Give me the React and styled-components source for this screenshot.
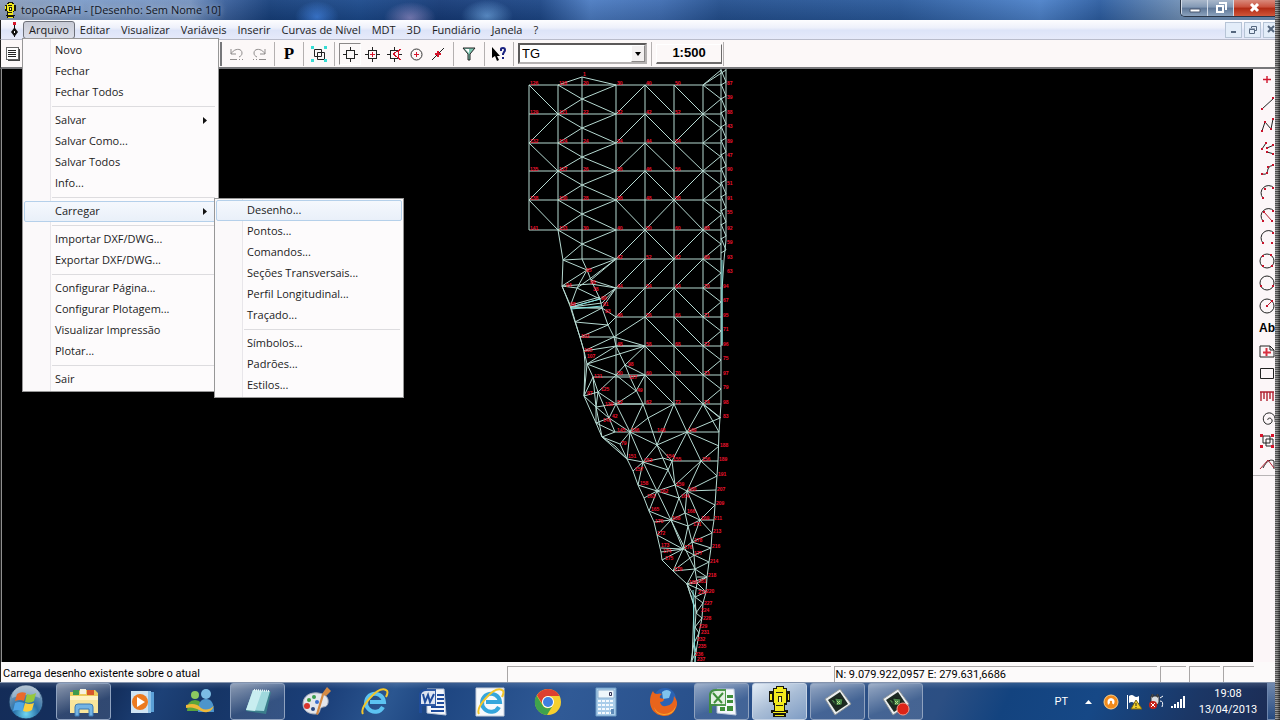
import React from 'react';
import styled, { createGlobalStyle, css } from 'styled-components';

const UI = '"Open Sans", "Noto Sans", sans-serif';

const GlobalStyle = createGlobalStyle`
  * { box-sizing: border-box; }
  html, body { margin: 0; padding: 0; background: #000; }
  button, select { font: inherit; color: inherit; }
  svg { display: block; }
`;

/* ---------- shell ---------- */

const Desktop = styled.div`
  display: grid;
  grid-template-columns: minmax(0, 1fr) 5px;
  min-height: 100vh;
  overflow: hidden;
  font: 11px/16px ${UI};
  color: #1c1c1c;
`;

const Screen = styled.div`
  display: flex;
  flex-direction: column;
  min-width: 0;
  overflow: hidden;
`;

const EdgeStrip = styled.div`
  background: linear-gradient(90deg, rgba(0, 0, 0, 0) 40%, rgba(0, 0, 0, 0.5)),
    repeating-linear-gradient(180deg, #8e8e8e 0 1px, #5a5a5a 1px 2px, #a2a2a2 2px 3px, #4a4a4a 3px 4px);
`;

/* ---------- title bar ---------- */

const TitleBar = styled.header`
  display: flex;
  align-items: center;
  height: 20px;
  padding-left: 2px;
  color: #10151f;
  background:
    linear-gradient(180deg, rgba(255, 255, 255, 0.05), rgba(0, 0, 0, 0.12)),
    radial-gradient(ellipse 22px 16px at 317px 17px, #3b7bd8, transparent),
    radial-gradient(ellipse 26px 16px at 410px 18px, #7b80bd, transparent),
    radial-gradient(ellipse 26px 16px at 487px 16px, #5d93d2, transparent),
    linear-gradient(90deg, #8c9db8 0, #7c9cc9 80px, #7593c0 190px, #3a609c 225px, #17407c 270px,
      #1c4a8c 360px, #163b78 440px, #1d4787 540px, #4c7cc2 590px, #3f6db2 660px, #24508f 720px,
      #2a5a9c 900px, #4d82ca 1040px, #2d5ea2 1100px, #6f8fb6 1180px);
`;

const Title = styled.h1`
  flex: 1;
  margin: 0 0 0 3px;
  font: 400 11px/20px ${UI};
  text-shadow: 0 0 6px rgba(255, 255, 255, 0.7);
`;

const WindowButtons = styled.div`
  display: flex;
  align-self: flex-start;
  height: 17px;
  border: 1px solid #2a3648;
  border-width: 0 0 1px 1px;
  border-radius: 0 0 0 5px;
  overflow: hidden;
`;

const WindowButton = styled.button`
  display: grid;
  place-items: center;
  width: ${(p) => (p.$close ? 42 : 26)}px;
  padding: 0;
  border: 0;
  border-left: 1px solid #d3dce8;
  background: ${(p) =>
    p.$close
      ? 'linear-gradient(180deg, #d98a7c 0, #c9503c 45%, #b02a14 50%, #d0563a 100%)'
      : 'linear-gradient(180deg, #a9b8cb 0, #8298b4 45%, #5d7696 50%, #8ba2bd 100%)'};
`;

/* ---------- menu bar ---------- */

const MenuBar = styled.nav`
  position: relative;
  z-index: 5;
  display: flex;
  align-items: center;
  height: 20px;
  padding-left: 7px;
  border-left: 1px solid #222;
  border-bottom: 1px solid #b9bccb;
  background: linear-gradient(180deg, #fdfdff 0, #eef1fb 40%, #dde4f8 55%, #e6eafa 100%);
`;

const MenuSlot = styled.div`
  position: relative;
  margin-left: ${(p) => (p.$first ? 5 : 0)}px;
`;

const MenuButton = styled.button`
  display: block;
  height: 18px;
  padding: 0 5px 0 ${(p) => (p.$open ? 5 : 4)}px;
  border: 1px solid ${(p) => (p.$open ? '#6d7079' : 'transparent')};
  border-radius: 3px;
  background: ${(p) => (p.$open ? 'linear-gradient(180deg, #c8cbd6, #dcdfea)' : 'none')};
  line-height: 16px;
  white-space: nowrap;
`;

const MdiButtons = styled.div`
  display: flex;
  gap: 2px;
  margin: 0 -5px 0 auto;
`;

const MdiButton = styled.button`
  display: grid;
  place-items: center;
  width: 17px;
  height: 16px;
  padding: 0;
  border: 1px solid #b6c4d6;
  background: #e3edf9;
`;

const Popup = styled.ul`
  position: absolute;
  z-index: 10;
  margin: 0;
  padding: 1px;
  list-style: none;
  border: 1px solid #979797;
  background: linear-gradient(90deg, #fbf9fa 27px, #e8e6ea 27px 28px, #fdfbfc 28px);
`;

const FilePopup = styled(Popup)`
  top: 17px;
  left: -1px;
  width: 197px;
`;

const LoadPopup = styled(Popup)`
  top: -3px;
  left: 190px;
  width: 190px;
`;

const PopupRow = styled.li`
  position: relative;
`;

const PopupButton = styled.button`
  display: flex;
  align-items: center;
  justify-content: space-between;
  width: 100%;
  height: 21px;
  padding: 0 9px 0 30px;
  border: 1px solid transparent;
  border-radius: 2px;
  background: none;
  text-align: left;
  ${(p) =>
    p.$active &&
    css`
      border-color: #b5d0ea;
      background: linear-gradient(180deg, #f5f8fd, #e9f0f9);
    `}
`;

const PopupRule = styled.li`
  height: 7px;
  margin: 0 2px 0 28px;
  padding-top: 3px;
  &::before {
    content: '';
    display: block;
    border-top: 1px solid #dddcdf;
  }
`;

/* ---------- toolbar ---------- */

const Toolbar = styled.div`
  display: flex;
  align-items: center;
  height: 29px;
  border-left: 1px solid #222;
  border-bottom: 2px solid #77777a;
  background: #fcf8f8;
`;

const ToolGroup = styled.div`
  display: flex;
  align-items: center;
  height: 24px;
  padding: 0 ${(p) => p.$pad || 0}px;
  border-right: 1px solid #b4b0b0;
`;

const FileTools = styled(ToolGroup)`
  width: 221px;
  padding-left: 1px;
  border-right: 2px solid #77777a;
`;

const ToolButton = styled.button`
  display: grid;
  place-items: center;
  width: 22px;
  height: 22px;
  padding: 0;
  border: 1px solid transparent;
  background: none;
  ${(p) =>
    p.$pressed &&
    css`
      border-color: #8b8888 #fff #fff #8b8888;
    `}
`;

const BoldTool = styled(ToolButton)`
  font: 700 17px/20px "Liberation Serif", serif;
  color: #000;
`;

const SelectBox = styled.div`
  position: relative;
  margin: 0 4px;
`;

const LayerSelect = styled.select`
  appearance: none;
  display: block;
  width: 129px;
  height: 21px;
  padding: 0 18px 0 2px;
  border: 2px solid;
  border-color: #5b5959 #b5b2b2 #b5b2b2 #5b5959;
  border-radius: 0;
  background: #fff;
  font: 13px/16px "Liberation Sans", sans-serif;
  color: #000;
`;

const SelectArrow = styled.span`
  position: absolute;
  top: 2px;
  right: 2px;
  display: grid;
  place-items: center;
  width: 14px;
  height: 17px;
  border: 1px solid;
  border-color: #fff #8a8787 #8a8787 #fff;
  background: #f4f1f1;
  pointer-events: none;
`;

const ScaleButton = styled.button`
  width: 66px;
  height: 20px;
  margin: 0 1px 0 4px;
  padding: 0;
  border: 1px solid;
  border-color: #fff #6c6a6a #6c6a6a #fff;
  border-bottom-width: 2px;
  background: #fcf8f8;
  font: 700 13px/16px "Liberation Sans", sans-serif;
  color: #000;
`;

/* ---------- workspace ---------- */

const Workspace = styled.main`
  display: flex;
  flex: 1;
  min-height: 0;
  border-left: 1px solid #222;
`;

const Canvas = styled.section`
  display: flex;
  flex: 1;
  justify-content: center;
  min-width: 0;
  overflow: hidden;
  border-left: 1px solid #8f8f8f;
  background: #000;
`;

const Label = styled.text`
  font: 700 5px "Liberation Sans", sans-serif;
  fill: #f0142e;
`;

const DrawTools = styled.aside`
  width: 22px;
  background: #fcf6f8;
`;

const DrawGrid = styled.div`
  display: grid;
  grid-auto-rows: 1fr;
  height: 407px;
  border-bottom: 1px solid #b8b4b6;
`;

const DrawButton = styled.button`
  display: grid;
  place-items: center start;
  min-height: 0;
  padding: 0 0 0 6px;
  border: 0;
  background: none;
  overflow: hidden;
`;

const TextTool = styled(DrawButton)`
  font: 700 12px/16px "Liberation Sans", sans-serif;
  color: #000;
`;

/* ---------- status bar ---------- */

const StatusBar = styled.footer`
  display: grid;
  grid-template-columns: minmax(0, 502fr) minmax(0, 324fr) minmax(0, 324fr) 26px 31px 31px 18px;
  gap: 3px;
  height: 20px;
  padding: 4px 0 0 2px;
  border-left: 1px solid #222;
  background: #fcfafa;
  font-family: Roboto, ${UI};
  color: #000;
`;

const Pane = styled.div`
  padding-left: ${(p) => (p.$plain ? 0 : 1)}px;
  border: ${(p) => (p.$plain ? 0 : '1px solid #a9a6a6')};
  border-width: ${(p) => (p.$plain ? 0 : '1px 0 0 1px')};
  line-height: 15px;
  white-space: nowrap;
`;

/* ---------- taskbar ---------- */

const Taskbar = styled.div`
  display: flex;
  align-items: stretch;
  height: 38px;
  border-top: 1px solid #8493ac;
  background:
    linear-gradient(180deg, rgba(255, 255, 255, 0.12), transparent 6px),
    linear-gradient(115deg, #142c58 0, #14305f 110px, #1d4177 150px, #163566 200px, #1b3f79 300px, #2b5690 360px,
      #1d4580 400px, #305a96 520px, #284f8a 660px, #2c4f83 860px, #13437f 920px, #164886 1000px, #1b3766 1090px,
      #1c2d56 1160px, #1c3a6c 1280px);
`;

const StartButton = styled.button`
  display: grid;
  place-items: center;
  width: 46px;
  margin: 0 7px 0 3px;
  padding: 0;
  border: 0;
  background: none;
`;

const TaskList = styled.div`
  display: flex;
  flex: 1;
  gap: 3px;
  min-width: 0;
`;

const TaskButton = styled.button`
  display: grid;
  place-items: center;
  flex: 0 0 55px;
  padding: 0;
  border: 1px solid transparent;
  border-radius: 3px;
  background: none;
  ${(p) =>
    p.$running &&
    css`
      border-color: #8fa2bf;
      background: linear-gradient(160deg, rgba(255, 255, 255, 0.5), rgba(255, 255, 255, 0.12) 60%);
    `}
  ${(p) =>
    p.$active &&
    css`
      border-color: #c4d2e4;
      background: linear-gradient(150deg, #e4edf6, #a9bdd6 50%, #7e9cc4);
    `}
`;

const Tray = styled.div`
  display: flex;
  align-items: center;
  font-family: Roboto, ${UI};
  color: #fff;
`;

const Language = styled.span`
  margin-right: 9px;
`;

const TrayButton = styled.button`
  display: grid;
  place-items: center;
  width: ${(p) => p.$width || 22}px;
  height: 20px;
  padding: 0;
  border: 0;
  background: none;
`;

const Clock = styled.time`
  width: 78px;
  text-align: center;
`;

const ShowDesktop = styled.button`
  width: 8px;
  align-self: stretch;
  padding: 0;
  border: 1px solid #6d86ad;
  border-right: 0;
  background: linear-gradient(180deg, #7088ad, #274a80);
`;

/* ---------- terrain mesh ---------- */

const ROWS = [85, 114, 143, 171, 200, 230, 259, 288, 317, 346, 375, 404];
const COL = { A: 529, B: 558, C: 582, D: 616, E: 645, F: 674, G: 703, H: 721, I: 726 };
const MIDS = ROWS.map((y) => y + 14);

function gridLines() {
  const out = [];
  const seg = (a, ra, b, rb) => out.push([COL[a], ROWS[ra], COL[b], ROWS[rb]]);
  ROWS.forEach((y, r) => out.push([r < 6 ? COL.A : r === 6 ? COL.C : COL.D, y, COL.H, y]));
  seg('A', 0, 'A', 5);
  seg('B', 0, 'B', 5);
  out.push([COL.C, 77, COL.C, 259], [COL.C, 77, COL.B, 85], [COL.C, 77, COL.D, 85]);
  ['D', 'E', 'F', 'G'].forEach((c) => seg(c, 0, c, 11));
  [[0, 1], [2, 3], [4, 5]].forEach(([a, b]) => seg('A', a, 'B', b));
  [[2, 1], [4, 3]].forEach(([a, b]) => seg('A', a, 'B', b));
  for (let r = 0; r < 6; r += 1) {
    const y = MIDS[r];
    out.push([COL.B, ROWS[r], COL.C, y], [COL.D, ROWS[r], COL.C, y], [COL.C, y, COL.D, ROWS[r + 1]]);
    if (r < 5) out.push([COL.C, y, COL.B, ROWS[r + 1]]);
  }
  out.push([COL.C, MIDS[5], 563, 260]);
  const down = { DE: '00001000', EF: '11110100111', FG: '10101001111' };
  Object.entries(down).forEach(([pair, flags]) => {
    [...flags].forEach((f, r) => (f === '1' ? seg(pair[0], r, pair[1], r + 1) : seg(pair[0], r + 1, pair[1], r)));
  });
  for (let r = 0; r < 12; r += 1) {
    out.push([COL.G, ROWS[r], COL.H, MIDS[r]]);
    out.push([COL.H, MIDS[r] - 29, COL.G, ROWS[r]]);
  }
  for (let y = 70; y < 240; y += 14) {
    out.push([COL.H, y, COL.I, y + 12], [COL.I, y + 12, COL.H, y + 15]);
  }
  return out;
}

const STRIPS = [
  [703, 85, 726, 70], [721, 69, 721, 404, 719, 432, 718, 461, 716, 490, 714, 520, 712, 533, 711, 548, 709, 562, 707, 577, 706, 592, 703, 603, 702, 618, 699, 633, 696, 652, 695, 662],
  [726, 69, 726, 240, 724, 260, 722, 290, 722, 346],
  [558, 230, 563, 260, 562, 286, 570, 306, 575, 322, 580, 337, 584, 351, 587, 364, 584, 396, 596, 423, 602, 437, 627, 459, 633, 471, 638, 485, 644, 498, 649, 511, 654, 522, 657, 535, 661, 552, 662, 560, 673, 571, 687, 584, 694, 606, 692, 662],
  [562, 286, 568, 300, 571, 307, 584, 351, 585, 364, 584, 396],
  [582, 259, 587, 270, 591, 280, 600, 299, 602, 308, 608, 325, 614, 337, 616, 346, 625, 365, 630, 377, 638, 394, 643, 404, 648, 418, 657, 445, 668, 470, 675, 485, 679, 498, 685, 513, 688, 526, 692, 542, 694, 555, 695, 569, 697, 583, 695, 597, 696, 613, 695, 627, 694, 643, 691, 662],
  [563, 260, 582, 259], [563, 260, 587, 270, 616, 259, 591, 280, 616, 288, 600, 299, 571, 307, 602, 303, 616, 288, 602, 308, 571, 307],
  [562, 286, 587, 270], [562, 286, 591, 284, 616, 288], [587, 270, 577, 288, 571, 304], [577, 288, 591, 278, 616, 259], [577, 288, 600, 299], [562, 286, 577, 288],
  [571, 305, 600, 297], [571, 308, 602, 308], [575, 322, 608, 325, 616, 317], [575, 322, 602, 308, 616, 317],
  [580, 337, 614, 337, 645, 317], [580, 337, 608, 325], [584, 351, 616, 346, 645, 346], [584, 351, 614, 337, 645, 346], [587, 364, 645, 346, 625, 365, 645, 375, 630, 377, 593, 377],
  [587, 364, 616, 346], [587, 364, 616, 375, 625, 365], [587, 364, 593, 377, 598, 392, 616, 375], [584, 396, 593, 377, 596, 407], [584, 396, 598, 392, 616, 404, 636, 391, 645, 375],
  [616, 375, 636, 391], [584, 396, 596, 407, 616, 404, 643, 404], [598, 392, 596, 407, 596, 423, 609, 418, 616, 404], [598, 392, 609, 418, 615, 432, 602, 437, 620, 444, 630, 432],
  [596, 407, 609, 418, 630, 432, 616, 404], [615, 432, 719, 432], [596, 423, 615, 432], [620, 444, 627, 459, 630, 432, 643, 462, 627, 459], [602, 437, 615, 446, 627, 459], [596, 407, 602, 437],
  [630, 432, 648, 418, 674, 404, 657, 445, 630, 432], [674, 404, 687, 432, 703, 404, 719, 432], [643, 404, 630, 432], [657, 445, 687, 432, 672, 461, 657, 445, 643, 462, 663, 458, 672, 461, 718, 461],
  [687, 432, 701, 461, 719, 446, 687, 432, 720, 418, 703, 404], [701, 461, 717, 476, 687, 491, 701, 461, 675, 485, 672, 461], [672, 461, 668, 470, 643, 462, 633, 471], [643, 462, 657, 491, 638, 485],
  [643, 462, 638, 485], [657, 491, 668, 470], [644, 498, 657, 491, 675, 485, 687, 491, 716, 490], [657, 491, 679, 498, 687, 491, 685, 513, 671, 520, 657, 491, 649, 511, 671, 520, 654, 522], [679, 498, 671, 520, 688, 526, 700, 520, 687, 491, 715, 505, 700, 520, 714, 520],
  [685, 513, 700, 520, 712, 533, 692, 542, 700, 520], [671, 520, 657, 535, 683, 549, 671, 520], [688, 526, 683, 549, 661, 548], [661, 552, 683, 549, 662, 560], [683, 549, 673, 571, 695, 569, 687, 584, 707, 577, 695, 569, 709, 562, 694, 555, 683, 549, 692, 542, 711, 548, 694, 555, 673, 571],
  [671, 520, 695, 569], [687, 584, 697, 583, 706, 592, 695, 597, 703, 603, 696, 613, 702, 618, 695, 627, 699, 633, 694, 643, 696, 652, 692, 660], [697, 583, 707, 577], [687, 584, 695, 597], [687, 584, 697, 613], [687, 584, 706, 592], [697, 577, 707, 577],
];

const MESH_PATH =
  gridLines()
    .map(([a, b, c, d]) => `M${a} ${b}L${c} ${d}`)
    .join('') +
  STRIPS.map((s) => s.reduce((d, v, i) => d + (i === 0 ? 'M' : i % 2 ? ' ' : 'L') + v, '')).join('');

const MESH_LABELS = [
  ...['A', 'B', 'C', 'D', 'E', 'F'].flatMap((c, ci) =>
    ROWS.filter((_, r) => (ci < 3 ? r < 6 : true)).map((y, r) => [COL[c], y, ci < 2 ? 126 - ci * 8 + r * 3 : ci * 10 + r * 2])
  ),
  ...ROWS.slice(5).map((y, r) => [COL.G, y, 68 + r]),
  ...ROWS.flatMap((y, r) => [[726 - (r > 6 ? 4 : 0), y, 87 + r], [726 - (r > 6 ? 4 : 0), y + 14, 39 + r * 4]]),
  [582, 76, 1], [585, 272, 95], [589, 284, 96], [592, 291, 38], [565, 287, 94], [600, 300, 90], [602, 306, 91], [604, 313, 93], [569, 306, 98],
  [580, 338, 102], [583, 352, 105], [586, 358, 107], [593, 378, 121], [600, 391, 125], [586, 395, 97], [604, 406, 139], [627, 366, 98], [628, 379, 127], [636, 392, 49],
  [602, 422, 141], [611, 418, 42], [616, 432, 145], [630, 432, 146], [656, 432, 148], [687, 432, 149], [620, 445, 79], [627, 458, 151], [643, 462, 153], [665, 458, 154], [672, 461, 155], [701, 461, 156],
  [634, 471, 157], [639, 485, 158], [659, 493, 162], [675, 486, 159], [687, 491, 160], [646, 498, 163], [680, 498, 164], [650, 511, 165], [686, 513, 166], [671, 520, 168], [700, 520, 169], [654, 523, 170],
  [692, 526, 171], [656, 535, 172], [660, 547, 173], [662, 553, 174], [664, 560, 175], [683, 549, 176], [693, 555, 177], [693, 542, 178], [673, 571, 179], [688, 584, 180], [697, 583, 181],
  [719, 447, 188], [718, 461, 189], [717, 476, 191], [716, 491, 207], [715, 505, 209], [713, 520, 211], [712, 533, 213], [711, 548, 216], [709, 563, 214], [707, 577, 218], [697, 594, 215], [705, 593, 220],
  [703, 605, 227], [700, 612, 224], [702, 620, 228], [698, 628, 229], [700, 634, 231], [696, 641, 232], [697, 648, 235], [694, 656, 236], [696, 661, 237],
];

const TerrainMesh = () => (
  <svg width="220" height="593" viewBox="518 69 220 593" role="img" aria-label="MDT">
    <path d={MESH_PATH} fill="none" stroke="#b6dad2" strokeWidth="1" />
    <path d="M571 307L600 299M571 309L602 306M693 590L695 662M722 260V345" stroke="#7fe3e0" strokeWidth="1" />
    {MESH_LABELS.map(([x, y, n], i) => (
      <Label key={i} x={x + 1} y={y}>
        {n}
      </Label>
    ))}
  </svg>
);

/* ---------- drawing icons ---------- */

const Dots = ({ at }) => at.map(([x, y]) => <rect key={`${x}-${y}`} x={x - 1} y={y - 1} width="2" height="2" fill="#c8142c" />);

const Draw = ({ d, dots = [], children }) => (
  <svg width="18" height="18" viewBox="0 0 18 18" fill="none" stroke="#222" strokeWidth="1">
    {d && <path d={d} />}
    {children}
    <g stroke="none">
      <Dots at={dots} />
    </g>
  </svg>
);

const DRAW_TOOLS = [
  ['Ponto', <Draw><path d="M8 5v7M4 8.500h8" stroke="#d0142c" strokeWidth="1.4" /></Draw>],
  ['Linha', <Draw d="M3 15L15 4" dots={[[3, 15], [14, 4]]} />],
  ['Polilinha', <Draw d="M3 15L6 6L12 13L14 3" dots={[[3, 15], [6, 6], [12, 13], [14, 3]]} />],
  ['Segmentos', <Draw d="M3 10L7 4M8 9L15 6M8 13L15 15" dots={[[3, 10], [7, 4], [8, 9], [14, 6], [8, 13], [14, 15]]} />],
  ['Curva', <Draw d="M3 13C9 14 8 11 9 8C10 5 12 5 15 4" dots={[[3, 13], [8, 12], [9, 6], [14, 4]]} />],
  ['Arco', <Draw d="M4 14A7 7 0 0 1 15 4" dots={[[4, 14], [6, 5], [14, 4]]} />],
  ['Arco por raio', <Draw d="M4 14A7 7 0 0 1 15 4" dots={[[5, 5], [13, 14], [4, 14], [14, 4]]}><path d="M5 5L13 14" stroke="#b02030" /></Draw>],
  ['Arco por centro', <Draw d="M4 14A7 7 0 0 1 15 4" dots={[[4, 14], [13, 14], [14, 4]]} />],
  ['Círculo por pontos', <Draw dots={[[4, 4], [12, 3], [4, 14], [13, 14]]}><circle cx="8" cy="9" r="7" /></Draw>],
  ['Círculo', <Draw dots={[[2, 12], [14, 12]]}><circle cx="8" cy="9" r="7" /></Draw>],
  ['Círculo por raio', <Draw dots={[[8, 9], [13, 4]]}><circle cx="8" cy="9" r="7" /><path d="M8 9L13 4" stroke="#b02030" /></Draw>],
  ['Ab', null],
  ['Símbolo', <Draw d="M1 4h10l4 4v7H1zM11 4v4h4"><path d="M7.500 6v8M4 10.500h8" stroke="#d83040" strokeWidth="2" /></Draw>],
  ['Retângulo', <Draw d="M1.500 4.500h13v10h-13z" />],
  ['Talude', <Draw><path d="M1 5h14M2 5v9M5 5v7M8 5v9M11 5v7M14 5v9" stroke="#b02030" strokeWidth="1.4" /></Draw>],
  ['Espiral', <Draw d="M9 10c-1-2 3-3 4 0s-4 6-7 3s-2-9 3-10s8 4 7 9" />],
  ['Bloco', <Draw d="M4 4h7v7H4zM7 7h7v7H7z"><path d="M1 2h3v3H1zM12 2h3v3h-3zM1 13h3v3H1zM12 13h3v3h-3z" fill="#d8142c" stroke="none" /></Draw>],
  ['Tangente', <Draw d="M4 13C8 5 12 4 15 6V14"><path d="M1 14L9 5L15 13" stroke="#b02030" /></Draw>],
];

const Snap = ({ children, red }) => (
  <svg width="16" height="16" viewBox="0 0 16 16" fill="none" stroke="#222" shapeRendering="crispEdges">
    <path d="M4.500 4.500h8v8h-8zM8.500 1v3M8.500 13v3M1 8.500h3M13 8.500h3" />
    {red && <path d="M8.500 6v5M6 8.500h5" stroke="#d8142c" />}
    {children}
  </svg>
);

const Undo = ({ flip }) => (
  <svg width="18" height="16" viewBox="0 0 18 16" fill="none" stroke="#8f8c8c">
    <g transform={flip ? 'matrix(-1 0 0 1 18 0)' : undefined}>
      <path d="M3 3v5h5M3 8C6 2 14 2 14 7C14 9 13 10 11 11" />
      <path d="M2 13.500h7M11 13.500h1M14 13.500h1" />
    </g>
  </svg>
);

const Surveyor = ({ size = 16 }) => (
  <svg width={size} height={size} viewBox="0 0 32 32" shapeRendering="crispEdges">
    <path d="M12 0h9v2h3v3h3v12h-3v3h-2v5h3v3h-2v4H9v-4H7v-3h3v-5H9v-3H5V5h4V2h3z" fill="#17170c" />
    <path d="M13 1h7v2h3v15h-2v8H11v-8h-1V3h3z" fill="#f3ea1c" />
    <path d="M6 8h2v6H6zM25 8h1v6h-1zM9 27h14v1H9zM11 30h10v1H11z" fill="#f3ea1c" />
    <path d="M12 6h8v1h-8zM14 10h5v7h-5zM12 20h8v1h-8z" fill="#22220f" />
    <path d="M15 11h3v5h-3z" fill="#fff68c" />
  </svg>
);

/* ---------- taskbar icons ---------- */

const Icon = ({ children, size = 30 }) => (
  <svg width={size} height={size} viewBox="0 0 30 30">
    {children}
  </svg>
);

const Orb = () => (
  <svg width="36" height="36" viewBox="0 0 36 36">
    <defs>
      <radialGradient id="orb" cx="50%" cy="85%" r="80%">
        <stop offset="0" stopColor="#6fd8f2" />
        <stop offset="0.45" stopColor="#2a71a8" />
        <stop offset="1" stopColor="#8fa6bd" />
      </radialGradient>
    </defs>
    <circle cx="18" cy="18" r="17" fill="url(#orb)" stroke="#16335c" />
    <path d="M4 14a14 13 0 0 1 28 0q-14-6-28 0z" fill="#fff" opacity="0.3" />
    <path d="M9 10q4-3 9-1l-2 8q-4-2-9 0z" fill="#ea6a2c" />
    <path d="M19 10q4 2 9-1l-2 8q-4 3-9 1z" fill="#95c83d" />
    <path d="M7 19q4-2 9 0l-2 8q-4-2-9 0z" fill="#4fa5e8" />
    <path d="M17 19q4 2 9 0l-2 7q-4 3-9 1z" fill="#fbce3c" />
  </svg>
);

const Explorer = () => (
  <Icon>
    <path d="M1 5h8l2-2h15l3 3v20H1z" fill="#eccb5c" />
    <path d="M4 3h6v5H4z" fill="#3f9b4f" /><path d="M11 2h6v5h-6z" fill="#f6f1e0" /><path d="M18 3h7v5h-7z" fill="#d8572c" />
    <path d="M1 9h28v17H1z" fill="#f9e59b" /><path d="M1 9h28v4H1z" fill="#fdf2c3" />
    <path d="M6 29V20q0-3 3-3h12q3 0 3 3v9h-4v-7H10v7z" fill="#74b4e4" stroke="#3a78b4" />
  </Icon>
);

const Player = () => (
  <Icon>
    <path d="M12 5h15v20H12z" fill="#5a9fd6" /><path d="M9 4h15v22H9z" fill="#8cc1e8" /><path d="M4 4h17v22H4z" fill="#cfe4f4" />
    <circle cx="13" cy="15" r="8" fill="#ec7a20" /><path d="M10 10l8 5l-8 5z" fill="#fff" />
  </Icon>
);

const Messenger = () => (
  <Icon>
    <circle cx="10" cy="8" r="4" fill="#8cc860" /><path d="M2 24q0-11 8-11t8 11z" fill="#5aa53c" />
    <circle cx="21" cy="7" r="5" fill="#7cbce4" /><path d="M13 25q0-13 8-13t8 13z" fill="#4d95cc" />
    <path d="M1 18q10-3 15 3q6 4 13-2q-4 9-13 5Q8 19 1 21z" fill="#f0b838" />
  </Icon>
);

const Notepad = () => (
  <Icon>
    <path d="M10 3l18 2l-5 22l-20-3z" fill="#3b7f8c" /><path d="M10 3l17 1l-6 20l-18-1z" fill="#9fd8dc" />
    <path d="M10 3l9 1l-7 20l-9-1z" fill="#c9eef0" /><path d="M11 3l15 1" stroke="#e8f4f6" strokeWidth="2" strokeDasharray="1 1" />
  </Icon>
);

const Paint = () => (
  <Icon>
    <path d="M2 17C2 9 9 5 17 6s11 5 10 10s-5 3-7 5s0 6-6 6S2 24 2 17z" fill="#e3e6ec" stroke="#a7adba" />
    <circle cx="8" cy="13" r="2" fill="#3f9b3f" /><circle cx="13" cy="10" r="2" fill="#3a9f50" /><circle cx="6" cy="19" r="3" fill="#d8342c" /><circle cx="16" cy="15" r="2" fill="#3a6fd0" /><circle cx="12" cy="22" r="2" fill="#2a4a84" />
    <path d="M26 0l4 4l-5 5l-2-1l-6 20l-2-1l6-20z" fill="#d48a44" />
  </Icon>
);

const Explorer9 = ({ framed }) => (
  <Icon>
    {framed && <path d="M1 1h28v28H1z" fill="#f6f9fc" stroke="#c6cfda" />}
    <path d="M24 20a9 9 0 1 1 1-5H11" fill="none" stroke={framed ? '#35a6dc' : '#5cc3f2'} strokeWidth="4" />
    <path d="M4 27Q1 22 11 11T27 3q3 1 0 7" fill="none" stroke="#f4c62a" strokeWidth="2" />
  </Icon>
);

const Office = ({ color, children, sheet }) => (
  <Icon>
    <path d="M10 2h17l2 26l-19-2z" fill="#f4f7fb" stroke="#b7c4d8" />
    {sheet ? (
      <path d="M20 8h6v3h-6zM20 13h6v3h-6zM13 20h5v4h-5zM20 19h6v5h-6z" fill={color} />
    ) : (
      <path d="M20 8h7M20 12h7M20 16h7M14 20h13M14 24h13" stroke={color} strokeWidth="2" />
    )}
    <path d="M2 7Q3 2 9 2H19V19H5v7H2z" fill={color} opacity="0.9" />
    <path d="M4 8q1-4 5-4h9v13H4z" fill="#fff" opacity="0.85" />
    <path d={children} fill="none" stroke={color} strokeWidth="2" />
  </Icon>
);

const Chrome = () => (
  <Icon>
    <circle cx="15" cy="15" r="13" fill="#f6d02f" />
    <path d="M15 2a13 13 0 0 1 11.500 7H15a6 6 0 0 0-5.500 8L4 8.500A13 13 0 0 1 15 2z" fill="#dd4031" />
    <path d="M3.500 8.500A13 13 0 0 0 14 28l5.500-9a6 6 0 0 1-10-1z" fill="#3fa34c" />
    <circle cx="15" cy="15" r="6" fill="#fff" /><circle cx="15" cy="15" r="5" fill="#3f7fe0" />
  </Icon>
);

const Calculator = () => (
  <Icon>
    <path d="M5 1h20v28H5z" fill="#a9cdea" stroke="#6f9cc4" /><path d="M7 3h16v8H7z" fill="#eef6fb" stroke="#8cb0d0" />
    <path d="M18.500 5.500h2v3h-2z" fill="none" stroke="#335" />
    {[14, 18, 22, 26].map((y) => (
      <path key={y} d={`M7 ${y}h16`} stroke="#f4fafe" strokeWidth="2" strokeDasharray="3 1" />
    ))}
    <path d="M20 22h3v5h-3z" fill="#5f8cba" />
  </Icon>
);

const Firefox = () => (
  <Icon>
    <circle cx="16" cy="12" r="11" fill="#2a63b4" /><path d="M13 5q5-4 9 0l-2 6l-6 1z" fill="#7fc3ee" />
    <path d="M1 15Q1 8 4 4q1 3 4 3q3-1 5 0q-3 2-2 4l4 1q0 3-4 3q1 5 6 4q8-1 8-10q5 6 2 12Q23 30 14 29Q2 27 1 15z" fill="#e8641c" />
    <path d="M5 20q3 7 10 7q8 0 12-8q-2 9-12 9Q7 28 5 20z" fill="#f7a72c" />
  </Icon>
);

const Camtasia = ({ recording }) => (
  <Icon>
    <path d="M2 12L17 2L28 17L12 28z" fill="#eceff0" stroke="#8c9498" />
    <path d="M5 13L17 5L25 17L13 25z" fill="#1d2a22" />
    <path d="M8 12l5 2v5M12 11l8 1l-1 6l-7 1z" fill="#4b8a4c" stroke="#152018" />
    <path d="M14 14l3 3M17 14l-3 3" stroke="#b6e08a" />
    {recording && <circle cx="22" cy="22" r="6" fill="#dc2418" stroke="#f39a88" />}
  </Icon>
);

const TASKS = [
  ['Windows Explorer', <Explorer />, 'running'],
  ['Media Player', <Player />],
  ['Messenger', <Messenger />],
  ['Bloco de Notas', <Notepad />, 'running'],
  ['Paint', <Paint />],
  ['Internet Explorer', <Explorer9 />],
  ['Word', <Office color="#1f4c9c">M6 7l2 8l3-7l2 7l4-8</Office>],
  ['Atalho', <Explorer9 framed />],
  ['Chrome', <Chrome />],
  ['Calculadora', <Calculator />],
  ['Firefox', <Firefox />],
  ['Excel', <Office color="#3f8f3a" sheet>M6 6l9 10M16 6l-9 10</Office>, 'running'],
  ['topoGRAPH', <Surveyor size={31} />, 'active'],
  ['Camtasia', <Camtasia />, 'running'],
  ['Gravador', <Camtasia recording />, 'running'],
];

/* ---------- menus ---------- */

const FILE_MENU = [
  'Novo', 'Fechar', 'Fechar Todos', null,
  'Salvar', 'Salvar Como...', 'Salvar Todos', 'Info...', null,
  'Carregar', null,
  'Importar DXF/DWG...', 'Exportar DXF/DWG...', null,
  'Configurar Página...', 'Configurar Plotagem...', 'Visualizar Impressão', 'Plotar...', null,
  'Sair',
];

const LOAD_MENU = [
  'Desenho...', 'Pontos...', 'Comandos...', 'Seções Transversais...', 'Perfil Longitudinal...', 'Traçado...', null,
  'Símbolos...', 'Padrões...', 'Estilos...',
];

const MENUS = ['Editar', 'Visualizar', 'Variáveis', 'Inserir', 'Curvas de Nível', 'MDT', '3D', 'Fundiário', 'Janela', '?'];

const SubmenuArrow = () => (
  <svg width="4" height="7" viewBox="0 0 4 7">
    <path d="M0 0l4 3.500L0 7z" fill="#111" />
  </svg>
);

const MenuRows = ({ items, active, submenu }) =>
  items.map((label, i) =>
    label === null ? (
      <PopupRule key={i} />
    ) : (
      <PopupRow key={label}>
        <PopupButton type="button" $active={label === active}>
          {label}
          {submenu && (label === 'Salvar' || label === 'Carregar') && <SubmenuArrow />}
        </PopupButton>
        {submenu && label === active && submenu}
      </PopupRow>
    )
  );

export default function App() {
  return (
    <>
      <GlobalStyle />
      <Desktop>
        <Screen>
          <TitleBar>
            <Surveyor />
            <Title>topoGRAPH - [Desenho: Sem Nome 10]</Title>
            <WindowButtons>
              <WindowButton type="button" aria-label="Minimizar">
                <svg width="12" height="10"><path d="M1 6h10v3H1z" fill="#fff" stroke="#4a5870" /></svg>
              </WindowButton>
              <WindowButton type="button" aria-label="Restaurar">
                <svg width="12" height="12" fill="none"><path d="M4 1h7v7M2 4h6v6H2z" stroke="#fff" strokeWidth="2" /></svg>
              </WindowButton>
              <WindowButton type="button" $close aria-label="Fechar">
                <svg width="12" height="10" fill="none"><path d="M2 1l7 7M9 1l-7 7" stroke="#fff" strokeWidth="3" /></svg>
              </WindowButton>
            </WindowButtons>
          </TitleBar>

          <MenuBar>
            <svg width="10" height="16" viewBox="0 0 10 16">
              <path d="M5 0h3v3H5z" fill="#d8182c" />
              <path d="M6 3h1v3l3 4l-3 4v1H6v-1l-3-4l3-4z" fill="#111" /><path d="M6 9h1v2H6z" fill="#fff" />
            </svg>
            <MenuSlot $first>
              <MenuButton type="button" $open>Arquivo</MenuButton>
              <FilePopup>
                <MenuRows
                  items={FILE_MENU}
                  active="Carregar"
                  submenu={<LoadPopup><MenuRows items={LOAD_MENU} active="Desenho..." /></LoadPopup>}
                />
              </FilePopup>
            </MenuSlot>
            {MENUS.map((m) => (
              <MenuSlot key={m}>
                <MenuButton type="button">{m}</MenuButton>
              </MenuSlot>
            ))}
            <MdiButtons>
              <MdiButton type="button" aria-label="Minimizar desenho">
                <svg width="9" height="9"><path d="M2 6h5v2H2z" fill="#55677e" /></svg>
              </MdiButton>
              <MdiButton type="button" aria-label="Restaurar desenho">
                <svg width="9" height="9" fill="none" stroke="#55677e"><path d="M3.500 3V1.500h5v4H7M1.500 4.500h5v4h-5zM1 4h6" /></svg>
              </MdiButton>
              <MdiButton type="button" aria-label="Fechar desenho">
                <svg width="9" height="9"><path d="M1 1l6 6M7 1l-6 6" stroke="#55677e" strokeWidth="2" /></svg>
              </MdiButton>
            </MdiButtons>
          </MenuBar>

          <Toolbar>
            <FileTools>
              <ToolButton type="button" aria-label="Propriedades">
                <svg width="14" height="14" shapeRendering="crispEdges"><path d="M2 2h12v12H2z" fill="#444" /><path d="M0 0h12v12H0z" fill="#fff" stroke="#666" /><path d="M2 3h8M2 5h8M2 7h8M2 9h8" stroke="#222" /></svg>
              </ToolButton>
            </FileTools>
            <ToolGroup $pad={4}>
              <ToolButton type="button" aria-label="Desfazer"><Undo /></ToolButton>
              <ToolButton type="button" aria-label="Refazer"><Undo flip /></ToolButton>
            </ToolGroup>
            <ToolGroup $pad={3}>
              <BoldTool type="button">P</BoldTool>
            </ToolGroup>
            <ToolGroup $pad={4}>
              <ToolButton type="button" aria-label="Agrupar">
                <svg width="16" height="16" fill="none" stroke="#222"><path d="M3.500 3.500h7v7h-7zM6.500 6.500h7v7h-7z" /><path d="M0 0h3v3H0zM13 0h3v3h-3zM0 13h3v3H0zM13 13h3v3h-3z" fill="#38dcd4" stroke="none" /></svg>
              </ToolButton>
            </ToolGroup>
            <ToolGroup $pad={4}>
              <ToolButton type="button" $pressed aria-label="Livre"><Snap /></ToolButton>
              <ToolButton type="button" aria-label="Ponto"><Snap red /></ToolButton>
              <ToolButton type="button" aria-label="Extremo"><Snap><path d="M15 3L7 8l8 6M12 4v8" stroke="#d8142c" /></Snap></ToolButton>
              <ToolButton type="button" aria-label="Centro">
                <svg width="16" height="16" fill="none"><circle cx="8.500" cy="8.500" r="5.500" stroke="#333" /><path d="M8.500 6v5M6 8.500h5" stroke="#d8142c" /></svg>
              </ToolButton>
              <ToolButton type="button" aria-label="Sobre linha">
                <svg width="16" height="16" fill="none"><path d="M2 14L14 2" stroke="#222" /><path d="M8 5v6M5 8h6" stroke="#d8142c" strokeWidth="2" /></svg>
              </ToolButton>
            </ToolGroup>
            <ToolGroup $pad={4}>
              <ToolButton type="button" aria-label="Filtro">
                <svg width="14" height="14"><path d="M1 1h12L8 7v6H6V7z" fill="#7fc9b4" stroke="#222" /><path d="M3 2h4v4z" fill="#fff" /></svg>
              </ToolButton>
            </ToolGroup>
            <ToolGroup $pad={3}>
              <ToolButton type="button" aria-label="Ajuda de contexto">
                <svg width="16" height="16" fill="none"><path d="M1 1v11l3-2l2 5l2-1l-2-4h3z" fill="#000" /><path d="M10 5V3q0-1 2-1t2 2q0 1-1 2l-1 2v1M12 11v2" stroke="#1a2280" strokeWidth="2" /></svg>
              </ToolButton>
            </ToolGroup>
            <SelectBox>
              <LayerSelect aria-label="Camada" defaultValue="TG">
                <option>TG</option>
              </LayerSelect>
              <SelectArrow>
                <svg width="6" height="4"><path d="M0 0h6L3 4z" fill="#000" /></svg>
              </SelectArrow>
            </SelectBox>
            <ToolGroup as="span" />
            <ToolGroup>
              <ScaleButton type="button">1:500</ScaleButton>
            </ToolGroup>
          </Toolbar>

          <Workspace>
            <Canvas>
              <TerrainMesh />
            </Canvas>
            <DrawTools>
              <DrawGrid>
                {DRAW_TOOLS.map(([name, icon]) =>
                  icon ? (
                    <DrawButton key={name} type="button" aria-label={name}>{icon}</DrawButton>
                  ) : (
                    <TextTool key={name} type="button">Ab</TextTool>
                  )
                )}
              </DrawGrid>
            </DrawTools>
          </Workspace>

          <StatusBar>
            <Pane $plain>Carrega desenho existente sobre o atual</Pane>
            <Pane />
            <Pane>N: 9.079.922,0957 E: 279.631,6686</Pane>
            <Pane />
            <Pane />
            <Pane />
          </StatusBar>

          <Taskbar>
            <StartButton type="button" aria-label="Iniciar"><Orb /></StartButton>
            <TaskList>
              {TASKS.map(([name, icon, state]) => (
                <TaskButton key={name} type="button" aria-label={name} $running={state === 'running'} $active={state === 'active'}>
                  {icon}
                </TaskButton>
              ))}
            </TaskList>
            <Tray>
              <Language>PT</Language>
              <TrayButton type="button" aria-label="Ícones ocultos">
                <svg width="7" height="4"><path d="M3.500 0L7 4H0z" fill="#fff" /></svg>
              </TrayButton>
              <TrayButton type="button" $width={24} aria-label="Antivírus">
                <svg width="16" height="16"><circle cx="8" cy="8" r="7" fill="#f08a1c" stroke="#fbd08a" /><path d="M5 11q-2-6 3-7q5 1 3 6q-2 1-2-3q-3-1-2 2z" fill="#fff" /></svg>
              </TrayButton>
              <TrayButton type="button" aria-label="Central de ações">
                <svg width="16" height="16"><path d="M1 1h1v14H1zM3 2q3-2 5 0t5 0v7q-3 2-5 0t-5 0z" fill="#fff" /><path d="M10 6l6 9H5z" fill="#f2d02c" stroke="#7a6510" /><path d="M10 9v3M10 13v1" stroke="#222" /></svg>
              </TrayButton>
              <TrayButton type="button" aria-label="Energia">
                <svg width="16" height="16"><path d="M3 2h8v6q0 3-4 3t-4-3zM4 0h1v3H4zM9 0h1v3H9z" fill="#d8dce0" stroke="#333" /><path d="M12 4l3-2M12 7q4 0 2 6" stroke="#fff" fill="none" /><circle cx="5" cy="11" r="4" fill="#c82018" /><path d="M3 9l4 4M7 9l-4 4" stroke="#fff" /></svg>
              </TrayButton>
              <TrayButton type="button" aria-label="Rede">
                <svg width="14" height="12"><path d="M0 10h2v2H0zM3 8h2v4H3zM6 6h2v6H6zM9 3h2v9H9zM12 0h2v12h-2z" fill="#fff" /></svg>
              </TrayButton>
              <Clock dateTime="2013-04-13T19:08">
                19:08
                <br />
                13/04/2013
              </Clock>
              <ShowDesktop type="button" aria-label="Mostrar área de trabalho" />
            </Tray>
          </Taskbar>
        </Screen>
        <EdgeStrip />
      </Desktop>
    </>
  );
}
